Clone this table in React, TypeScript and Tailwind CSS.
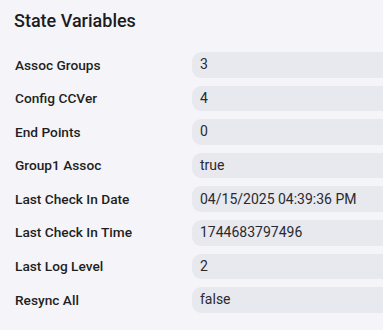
const rows: [string, string][] = [
  ["Assoc Groups", "3"],
  ["Config CCVer", "4"],
  ["End Points", "0"],
  ["Group1 Assoc", "true"],
  ["Last Check In Date", "04/15/2025 04:39:36 PM"],
  ["Last Check In Time", "1744683797496"],
  ["Last Log Level", "2"],
  ["Resync All", "false"],
]

export default function App() {
  return (
    <div
      className="h-[330px] w-[383px] overflow-hidden bg-[#f5f5f9] pl-[14px] pt-[9px]"
      style={{ fontFamily: "Roboto, 'Liberation Sans', sans-serif" }}
    >
      <h2 className="text-[18px] leading-[24px] font-medium text-[#1c1c1e]">State Variables</h2>
      <div className="mt-[19px] flex flex-col gap-[8px]">
        {rows.map(([label, value]) => (
          <div key={label} className="flex items-center">
            <div className="w-[178px] shrink-0 pl-px text-[13.7px] font-medium text-[#1f1f22]">{label}</div>
            <div className="flex h-[25.6px] w-[260px] shrink-0 items-center rounded-[9px] bg-[#e8e8ef] pl-[8px] text-[14px] text-[#2a2a2e]">
              {value}
            </div>
          </div>
        ))}
      </div>
    </div>
  )
}
